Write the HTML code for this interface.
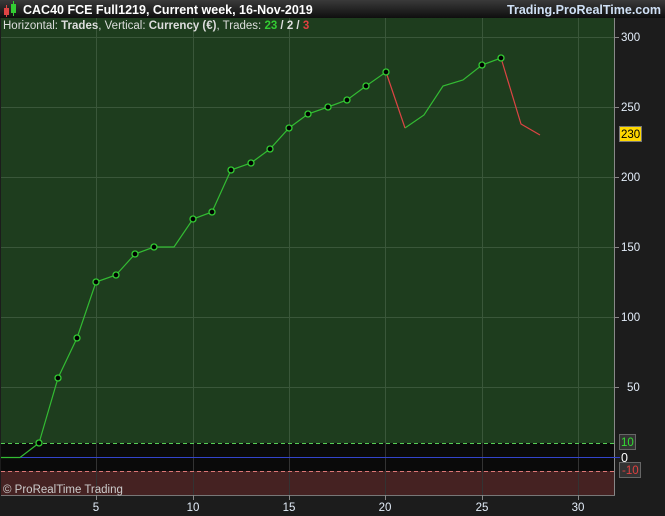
<!DOCTYPE html>
<html><head><style>
body{margin:0;width:665px;height:516px;overflow:hidden;background:#1c1c1c;font-family:"Liberation Sans",sans-serif;position:relative}
.t{position:absolute;white-space:nowrap;line-height:1;font-size:11.5px;color:#e4eefa}
.r{text-align:center;width:30px}
b{font-weight:bold}
</style></head><body>
<svg width="665" height="516" xmlns="http://www.w3.org/2000/svg" style="position:absolute;left:0;top:0">
<defs><linearGradient id="tb" x1="0" y1="0" x2="0" y2="1"><stop offset="0" stop-color="#3a3a3a"/><stop offset="1" stop-color="#0e0e0e"/></linearGradient></defs>
<rect width="665" height="516" fill="#1c1c1c"/>
<rect width="665" height="18" fill="url(#tb)"/>
<rect x="4" y="8" width="5" height="7" fill="#d44"/><line x1="6.5" y1="5" x2="6.5" y2="17" stroke="#d44"/>
<rect x="11" y="4" width="5" height="9" fill="#3c3"/><line x1="13.5" y1="1" x2="13.5" y2="16" stroke="#3c3"/>
<rect x="1" y="18" width="613" height="425" fill="#1e3d1e"/>
<rect x="1" y="443" width="613" height="28" fill="#0a0a0a"/>
<rect x="1" y="471" width="613" height="24" fill="#452222"/>
<line x1="614.5" y1="18" x2="614.5" y2="495" stroke="#888"/>
<line x1="1" y1="495.5" x2="615" y2="495.5" stroke="#777"/>
<g stroke="#3a573a" stroke-width="1">
<line x1="96.5" y1="18" x2="96.5" y2="443"/><line x1="193.5" y1="18" x2="193.5" y2="443"/><line x1="289.5" y1="18" x2="289.5" y2="443"/><line x1="385.5" y1="18" x2="385.5" y2="443"/><line x1="482.5" y1="18" x2="482.5" y2="443"/><line x1="578.5" y1="18" x2="578.5" y2="443"/>
<line x1="1" y1="37.5" x2="614" y2="37.5"/><line x1="1" y1="107.5" x2="614" y2="107.5"/><line x1="1" y1="177.5" x2="614" y2="177.5"/><line x1="1" y1="247.5" x2="614" y2="247.5"/><line x1="1" y1="317.5" x2="614" y2="317.5"/><line x1="1" y1="387.5" x2="614" y2="387.5"/>
</g>
<g stroke="#333" stroke-width="1">
<line x1="96.5" y1="443" x2="96.5" y2="495"/><line x1="193.5" y1="443" x2="193.5" y2="495"/><line x1="289.5" y1="443" x2="289.5" y2="495"/><line x1="385.5" y1="443" x2="385.5" y2="495"/><line x1="482.5" y1="443" x2="482.5" y2="495"/><line x1="578.5" y1="443" x2="578.5" y2="495"/>
</g>
<line x1="1" y1="443.5" x2="614" y2="443.5" stroke="#5c5" stroke-dasharray="4,3"/>
<line x1="1" y1="471.5" x2="614" y2="471.5" stroke="#d77" stroke-dasharray="4,3"/>
<line x1="1" y1="457.5" x2="620" y2="457.5" stroke="#3344cc"/>
<polyline fill="none" stroke="#33bb33" stroke-width="1.2" points="1,457.5 20,457.5 39,443 58,378 77,338 96,282 116,275 135,254 154,247 174,247 193,219 212,212 231,170 251,163 270,149 289,128 308,114 328,107 347,100 366,86 386,72"/>
<polyline fill="none" stroke="#33bb33" stroke-width="1.2" points="405,128 424,115 443,86 463,80 482,65 501,58"/>
<polyline fill="none" stroke="#dd4444" stroke-width="1.2" points="386,72 405,128"/>
<polyline fill="none" stroke="#dd4444" stroke-width="1.2" points="501,58 521,124 540,135"/>
<g fill="#000" stroke="#33cc33" stroke-width="1.3">
<circle cx="39" cy="443" r="3"/><circle cx="58" cy="378" r="3"/><circle cx="77" cy="338" r="3"/><circle cx="96" cy="282" r="3"/><circle cx="116" cy="275" r="3"/><circle cx="135" cy="254" r="3"/><circle cx="154" cy="247" r="3"/><circle cx="193" cy="219" r="3"/><circle cx="212" cy="212" r="3"/><circle cx="231" cy="170" r="3"/><circle cx="251" cy="163" r="3"/><circle cx="270" cy="149" r="3"/><circle cx="289" cy="128" r="3"/><circle cx="308" cy="114" r="3"/><circle cx="328" cy="107" r="3"/><circle cx="347" cy="100" r="3"/><circle cx="366" cy="86" r="3"/><circle cx="386" cy="72" r="3"/><circle cx="482" cy="65" r="3"/><circle cx="501" cy="58" r="3"/>
</g>
<g stroke="#888"><line x1="614" y1="37.5" x2="619" y2="37.5"/><line x1="614" y1="107.5" x2="619" y2="107.5"/><line x1="614" y1="177.5" x2="619" y2="177.5"/><line x1="614" y1="247.5" x2="619" y2="247.5"/><line x1="614" y1="317.5" x2="619" y2="317.5"/><line x1="614" y1="387.5" x2="619" y2="387.5"/>
<line x1="96.5" y1="495" x2="96.5" y2="500"/><line x1="193.5" y1="495" x2="193.5" y2="500"/><line x1="289.5" y1="495" x2="289.5" y2="500"/><line x1="385.5" y1="495" x2="385.5" y2="500"/><line x1="482.5" y1="495" x2="482.5" y2="500"/><line x1="578.5" y1="495" x2="578.5" y2="500"/></g>
<rect x="619.5" y="126.5" width="22" height="15" fill="#ffd800" stroke="#777"/>
<rect x="619.5" y="434.5" width="16" height="15" fill="#333" stroke="#666"/>
<rect x="619.5" y="462.5" width="21" height="15" fill="#333" stroke="#666"/>
</svg>
<div class="t" style="left:23px;top:4px;font-size:12.5px;color:#fff;font-weight:bold">CAC40 FCE Full1219, Current week, 16-Nov-2019</div>
<div class="t" style="right:4px;top:4px;font-size:12.5px;color:#cfe0f5;font-weight:bold">Trading.ProRealTime.com</div>
<div class="t" style="left:3px;top:21px;color:#ddd">Horizontal: <b>Trades</b>, Vertical: <b>Currency (€)</b>, Trades: <b style="color:#33cc33">23</b><b> / 2 / </b><b style="color:#e04040">3</b></div>
<div class="t" style="left:3px;top:485px;color:#ccc">© ProRealTime Trading</div>
<div class="t" style="left:621px;top:33px">300</div>
<div class="t" style="left:621px;top:103px">250</div>
<div class="t" style="left:621px;top:173px">200</div>
<div class="t" style="left:621px;top:243px">150</div>
<div class="t" style="left:621px;top:313px">100</div>
<div class="t" style="left:627px;top:383px">50</div>
<div class="t r" style="left:81px;top:503px">5</div>
<div class="t r" style="left:178px;top:503px">10</div>
<div class="t r" style="left:274px;top:503px">15</div>
<div class="t r" style="left:370px;top:503px">20</div>
<div class="t r" style="left:467px;top:503px">25</div>
<div class="t r" style="left:563px;top:503px">30</div>
<div class="t" style="left:621px;top:130px;color:#000">230</div>
<div class="t" style="left:621px;top:438px;color:#33dd33">10</div>
<div class="t" style="left:621px;top:452px;color:#fff;font-size:12.5px">0</div>
<div class="t" style="left:622px;top:466px;color:#e04040">-10</div>
</body></html>
